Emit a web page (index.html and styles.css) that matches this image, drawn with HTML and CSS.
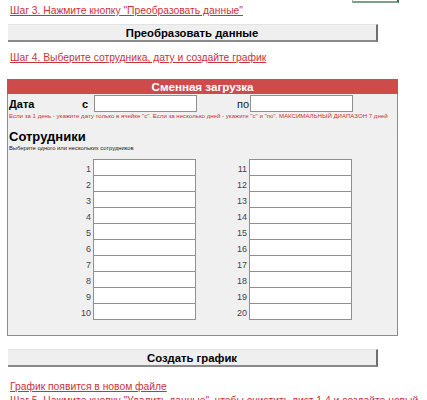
FILE: index.html
```html
<!DOCTYPE html>
<html lang="ru">
<head>
    <meta charset="utf-8" />
    <title>Сменная загрузка</title>
    <link rel="stylesheet" href="styles.css">
</head>
<body>
    <div class="page">
        <div class="corner-mark"></div>

        <a class="step first" href="#">Шаг 3. Нажмите кнопку "Преобразовать данные"</a>
        <button class="sheet-button">Преобразовать данные</button>

        <a class="step" href="#">Шаг 4. Выберите сотрудника, дату и создайте график</a>

        <div class="panel">
            <div class="panel-header">Сменная загрузка</div>

            <div class="date-row">
                <span class="date-label">Дата</span>
                <span class="from-label">с</span>
                <input class="date-input" type="text">
                <span class="to-label">по</span>
                <input class="date-input" type="text">
            </div>
            <div class="note">Если за 1 день - укажите дату только в ячейке "с". Если за несколько дней - укажите "с" и "по". МАКСИМАЛЬНЫЙ ДИАПАЗОН 7 дней</div>

            <div class="section-title">Сотрудники</div>
            <div class="hint">Выберите одного или нескольких сотрудников</div>

            <div class="emp-list">
                <div class="emp-col" id="col-left"></div>
                <div class="emp-col emp-col2" id="col-right"></div>
            </div>
        </div>

        <button class="sheet-button create">Создать график</button>

        <a class="step result" href="#">График появится в новом файле</a>
        <a class="step last" href="#">Шаг 5. Нажмите кнопку "Удалить данные", чтобы очистить лист 1 4 и создайте новый</a>
    </div>

    <script>
        function fillColumn(id, from) {
            var col = document.getElementById(id);
            for (var i = from; i < from + 10; i++) {
                var row = document.createElement("div");
                row.className = "emp-row";
                row.innerHTML = "<span class='emp-num'>" + i + "</span><input class='emp-input' type='text'>";
                col.appendChild(row);
            }
        }
        fillColumn("col-left", 1);
        fillColumn("col-right", 11);
    </script>
</body>
</html>
```

FILE: styles.css
```css
body {
    margin: 0;
    background-color: #fff;
    font-family: "Liberation Sans", Arial, sans-serif;
    color: #000;
    overflow: hidden;
}

.page {
    width: 427px;
    height: 400px;
    overflow: hidden;
}

.corner-mark {
    margin-left: 352px;
    width: 44px;
    height: 1px;
    border-left: 1px solid #9fb8a8;
    border-bottom: 2px solid #7f9f8b;
    border-right: 2px solid #2f6a40;
}

.step {
    display: block;
    margin-left: 10px;
    font-size: 10.3px;
    line-height: 13px;
    color: #c8323a;
    text-decoration: underline;
    white-space: nowrap;
}

.step.first {
    margin-top: 1px;
}

.sheet-button {
    display: block;
    box-sizing: border-box;
    width: 370px;
    height: 18px;
    margin: 7px 0 9px 8px;
    padding: 0;
    background-color: #efefef;
    border: none;
    border-top: 1px solid #e2e2e2;
    border-right: 2px solid #6e6e6e;
    border-bottom: 2px solid #8a8a8a;
    font-family: "Liberation Sans", Arial, sans-serif;
    font-size: 11.3px;
    font-weight: bold;
    color: #000;
}

.panel {
    box-sizing: border-box;
    width: 391px;
    margin: 15px 0 0 7px;
    padding-bottom: 15px;
    background-color: #f0f0f0;
    border: 1px solid #8c8c8c;
    border-top: none;
}

.panel-header {
    height: 15px;
    margin: 0 -1px;
    background-color: #ce4b4b;
    color: #fff;
    font-size: 11.6px;
    font-weight: bold;
    line-height: 15px;
    text-align: center;
}

.date-row {
    display: flex;
    align-items: center;
    height: 17px;
    margin-top: 1px;
    padding-left: 1px;
}

.date-label {
    width: 73px;
    font-size: 11px;
    font-weight: bold;
}

.from-label {
    width: 12px;
    font-size: 11px;
    font-weight: bold;
}

.to-label {
    box-sizing: border-box;
    width: 53px;
    padding-right: 1px;
    font-size: 11px;
    text-align: right;
    color: #222;
}

.date-input {
    box-sizing: border-box;
    width: 103px;
    height: 17px;
    margin: 0;
    padding: 0;
    background-color: #fff;
    border: 1px solid #8f8f8f;
}

.note {
    margin-left: 1px;
    font-size: 6.1px;
    line-height: 7px;
    color: #c8323a;
    white-space: nowrap;
}

.section-title {
    margin: 10px 0 0 1px;
    font-size: 13px;
    font-weight: bold;
    line-height: 15px;
}

.hint {
    margin: 1px 0 0 1px;
    font-size: 5.8px;
    line-height: 7px;
    color: #222;
    white-space: nowrap;
}

.emp-list {
    display: flex;
    margin-top: 7px;
}

.emp-row {
    display: flex;
    align-items: flex-end;
    height: 16px;
}

.emp-num {
    width: 85px;
    padding-right: 2px;
    box-sizing: border-box;
    font-size: 9px;
    line-height: 13px;
    text-align: right;
    color: #444;
}

.emp-col2 .emp-num {
    width: 53px;
}

.emp-input {
    box-sizing: border-box;
    width: 103px;
    height: 16px;
    margin: 0;
    padding: 0;
    background-color: #fff;
    border: 1px solid #8f8f8f;
    border-top: none;
}

.emp-row:first-child {
    height: 17px;
}

.emp-row:first-child .emp-input {
    height: 17px;
    border-top: 1px solid #8f8f8f;
}

.create {
    margin-top: 13px;
    margin-bottom: 13px;
}

.last {
    margin-top: 1px;
}
```
